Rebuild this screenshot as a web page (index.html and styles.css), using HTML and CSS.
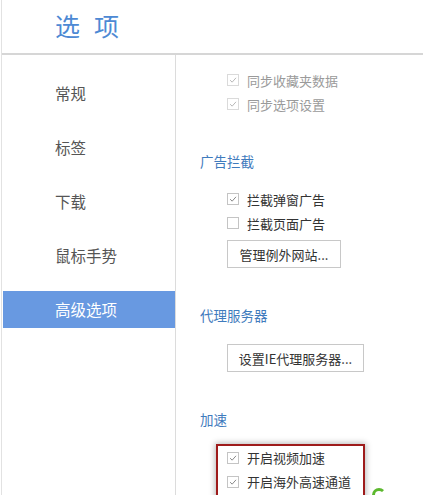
FILE: index.html
```html
<!DOCTYPE html>
<html lang="zh-CN">
<head>
<meta charset="utf-8">
<title>选项</title>
<link rel="stylesheet" href="styles.css">
</head>
<body>
<div class="app">
  <header class="header"><h1 class="title">选项</h1></header>
  <div class="main">
    <nav class="sidebar">
      <div class="nav-item">常规</div>
      <div class="nav-item">标签</div>
      <div class="nav-item">下载</div>
      <div class="nav-item">鼠标手势</div>
      <div class="nav-item active">高级选项</div>
    </nav>
    <section class="content">
      <div class="group first">
        <label class="row disabled"><span class="cb checked"><svg viewBox="0 0 12 12"><path d="M2.5 6.2 L5 8.6 L9.6 3.4"/></svg></span>同步收藏夹数据</label>
        <label class="row disabled"><span class="cb checked"><svg viewBox="0 0 12 12"><path d="M2.5 6.2 L5 8.6 L9.6 3.4"/></svg></span>同步选项设置</label>
      </div>
      <h2 class="sec">广告拦截</h2>
      <div class="group">
        <label class="row"><span class="cb checked"><svg viewBox="0 0 12 12"><path d="M2.5 6.2 L5 8.6 L9.6 3.4"/></svg></span>拦截弹窗广告</label>
        <label class="row"><span class="cb"></span>拦截页面广告</label>
        <button class="btn btn-sites">管理例外网站...</button>
      </div>
      <h2 class="sec">代理服务器</h2>
      <div class="group">
        <button class="btn btn-proxy">设置IE代理服务器...</button>
      </div>
      <h2 class="sec">加速</h2>
      <div class="highlight">
        <label class="row first-in-box"><span class="cb checked"><svg viewBox="0 0 12 12"><path d="M2.5 6.2 L5 8.6 L9.6 3.4"/></svg></span>开启视频加速</label>
        <label class="row tall"><span class="cb checked"><svg viewBox="0 0 12 12"><path d="M2.5 6.2 L5 8.6 L9.6 3.4"/></svg></span>开启海外高速通道</label>
      </div>
    </section>
  </div>
</div>
<div class="green-mark"></div>
</body>
</html>
```
FILE: styles.css
```css
* { box-sizing: border-box; }
html, body {
  margin: 0;
  padding: 0;
  width: 423px;
  height: 495px;
  overflow: hidden;
  background: #fff;
  font-family: "Noto Sans CJK SC", "Noto Sans", sans-serif;
}
.app {
  margin-left: 1px;
  border-left: 1px solid #e2e2e2;
  height: 495px;
  display: flex;
  flex-direction: column;
}
.header {
  height: 55px;
  display: flex;
  align-items: center;
  padding-left: 53px;
  border-bottom: 2px solid #d6d6d6;
  flex: none;
}
.title {
  margin: 0;
  font-weight: normal;
  font-size: 25px;
  line-height: 1;
  letter-spacing: 14px;
  color: #4d89d4;
  padding-bottom: 2px;
}
.main {
  flex: 1;
  display: flex;
  min-height: 0;
}
.sidebar {
  width: 173px;
  flex: none;
  margin-left: 1px;
  border-right: 1px solid #dcdcdc;
  padding-top: 20px;
  display: flex;
  flex-direction: column;
  gap: 17px;
}
.nav-item {
  height: 37px;
  line-height: 37px;
  padding-left: 52px;
  font-size: 15.5px;
  color: #555;
}
.nav-item.active {
  background: #6899e1;
  color: #fff;
}
.content {
  flex: 1;
  padding-left: 24px;
  padding-top: 13px;
  position: relative;
}
.group {
  padding-left: 27px;
  display: flex;
  flex-direction: column;
  align-items: flex-start;
}
.row {
  display: flex;
  align-items: center;
  height: 24px;
  font-size: 13px;
  color: #333;
  white-space: nowrap;
}
.row.disabled { color: #9a9a9a; }
.cb {
  width: 12px;
  height: 12px;
  border: 1px solid #c4c4c4;
  margin-right: 8px;
  display: inline-flex;
  background: #fff;
  flex: none;
}
.cb svg {
  width: 10px;
  height: 10px;
  fill: none;
  stroke: #8a8a8a;
  stroke-width: 1.2;
}
.row.disabled .cb { border-color: #dadada; }
.row.disabled .cb svg { stroke: #b9b9b9; }
.sec {
  margin: 0;
  font-weight: normal;
  font-size: 13.5px;
  line-height: 20px;
  height: 20px;
  color: #3f7bbd;
}
.group.first + .sec { margin-top: 35px; }
.sec + .group { margin-top: 16px; }
.group + .sec { margin-top: 37px; }
.btn {
  font-family: inherit;
  font-size: 13px;
  color: #333;
  background: #fff;
  border: 1px solid #c8c8c8;
  height: 28px;
  padding: 0;
  margin-top: 5px;
  cursor: pointer;
}
.btn-sites { width: 114px; }
.btn-proxy { width: 137px; margin-top: 3px; }
.sec + .group .btn-proxy { margin-top: 3px; }
.highlight {
  margin-top: 15px;
  margin-left: 16px;
  width: 149px;
  border: 2px solid #9e1b1b;
  border-bottom: none;
  padding-left: 9px;
  box-shadow: 0 0 6px 1px rgba(0, 0, 0, 0.28);
  height: 60px;
}
.row.first-in-box { height: 23px; }
.row.tall { height: 25px; }
.green-mark {
  position: absolute;
  left: 372px;
  top: 488px;
  width: 14px;
  height: 14px;
  border: 3px solid #5cb82e;
  border-radius: 50%;
  border-right-color: transparent;
}
```
